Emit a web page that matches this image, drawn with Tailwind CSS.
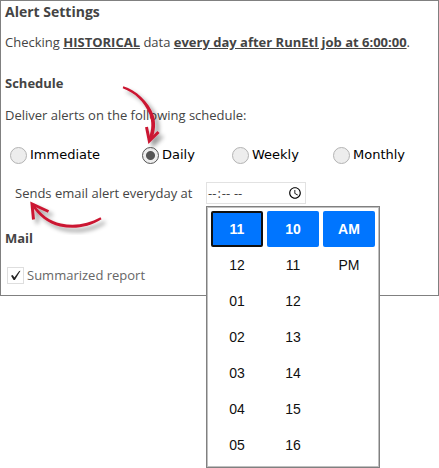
<!DOCTYPE html>
<html lang="en">
<head>
<meta charset="utf-8">
<meta name="viewport" content="width=device-width, initial-scale=1">
<title>Alert Settings</title>
<script src="https://cdn.jsdelivr.net/npm/@tailwindcss/browser@4"></script>
</head>
<body class="min-h-screen bg-white font-['Open_Sans',sans-serif] text-[13px] leading-5 text-[#444]">
<main class="relative border border-[#808080] px-1 pb-[10px]">
  <h1 class="pt-px text-sm font-bold leading-5">Alert Settings</h1>
  <p class="mt-2.5">Checking <b class="underline">HISTORICAL</b> data <b class="underline">every day after RunEtl job at 6:00:00</b>.</p>

  <h2 class="mt-[21px] font-bold">Schedule</h2>
  <p class="mt-3">Deliver alerts on the following schedule:</p>

  <div role="radiogroup" aria-label="Schedule" class="mt-5 grid grid-cols-[132fr_90fr_101fr_101fr] pl-[5px] font-['DejaVu_Sans',sans-serif] text-[13px] text-black">
    <label class="flex items-center gap-[3px]"><input type="radio" name="schedule" class="m-0 size-[17px] shrink-0 appearance-none rounded-full border border-[#b3b3b3] bg-[#ededed] checked:border-[#555] checked:bg-[radial-gradient(circle,#555_4px,#ededed_5px)]">Immediate</label>
    <label class="flex items-center gap-[3px]"><input type="radio" name="schedule" checked class="m-0 size-[17px] shrink-0 appearance-none rounded-full border border-[#b3b3b3] bg-[#ededed] checked:border-[#555] checked:bg-[radial-gradient(circle,#555_4px,#ededed_5px)]">Daily</label>
    <label class="flex items-center gap-[3px]"><input type="radio" name="schedule" class="m-0 size-[17px] shrink-0 appearance-none rounded-full border border-[#b3b3b3] bg-[#ededed] checked:border-[#555] checked:bg-[radial-gradient(circle,#555_4px,#ededed_5px)]">Weekly</label>
    <label class="flex items-center gap-[3px]"><input type="radio" name="schedule" class="m-0 size-[17px] shrink-0 appearance-none rounded-full border border-[#b3b3b3] bg-[#ededed] checked:border-[#555] checked:bg-[radial-gradient(circle,#555_4px,#ededed_5px)]">Monthly</label>
  </div>

  <div class="mt-[17px] flex items-center pl-[10px]">
    <label for="at" class="w-[191px]">Sends email alert everyday at</label>
    <div class="relative">
      <input id="at" type="time" class="block h-[22px] w-[100px] border border-[#e2e2e2] bg-white font-['Open_Sans',sans-serif] text-[13px] text-[#444]">
      <div class="absolute left-0 top-6 z-10 grid w-[174px] grid-cols-3 gap-1 border border-[#808080] bg-white p-1 font-['Liberation_Sans',sans-serif] text-sm text-[#101010] shadow-[inset_0_0_0_1px_#c0c0c0]">
        <div role="listbox" aria-label="Hours" class="flex flex-col">
          <button type="button" role="option" aria-selected="true" class="h-9 rounded-xs border-2 border-[#101010] bg-[#0075ff] font-bold text-white">11</button>
          <button type="button" role="option" class="h-9">12</button>
          <button type="button" role="option" class="h-9">01</button>
          <button type="button" role="option" class="h-9">02</button>
          <button type="button" role="option" class="h-9">03</button>
          <button type="button" role="option" class="h-9">04</button>
          <button type="button" role="option" class="h-9">05</button>
        </div>
        <div role="listbox" aria-label="Minutes" class="flex flex-col">
          <button type="button" role="option" aria-selected="true" class="h-9 rounded-xs bg-[#0075ff] font-bold text-white">10</button>
          <button type="button" role="option" class="h-9">11</button>
          <button type="button" role="option" class="h-9">12</button>
          <button type="button" role="option" class="h-9">13</button>
          <button type="button" role="option" class="h-9">14</button>
          <button type="button" role="option" class="h-9">15</button>
          <button type="button" role="option" class="h-9">16</button>
        </div>
        <div role="listbox" aria-label="AM or PM" class="flex flex-col">
          <button type="button" role="option" aria-selected="true" class="h-9 rounded-xs bg-[#0075ff] font-bold text-white">AM</button>
          <button type="button" role="option" class="h-9">PM</button>
        </div>
      </div>
    </div>
  </div>

  <h2 class="mt-6 font-bold">Mail</h2>
  <label class="mt-[17px] flex items-center gap-[3px] pl-0.5 text-[#666]">
    <span class="relative size-[17px]">
      <input type="checkbox" checked class="peer block size-[17px] appearance-none border border-[#dedede] bg-white">
      <svg class="pointer-events-none absolute inset-0 hidden peer-checked:block" width="17" height="17" viewBox="0 0 17 17" aria-hidden="true"><path d="M4 8.8 5.7 8l1.7 2.5L12.2 4l1.3-.3-5.6 9.4H6.600Z" fill="#222"/></svg>
    </span>
    Summarized report
  </label>

  <svg class="pointer-events-none absolute left-0 top-0" width="200" height="240" viewBox="1 1 200 240" aria-hidden="true">
    <defs>
      <filter id="soft" x="-30%" y="-30%" width="160%" height="160%"><feDropShadow dx="4" dy="4" stdDeviation="2" flood-color="#000" flood-opacity=".4"/></filter>
    </defs>
    <g fill="#cb1832" filter="url(#soft)">
      <path d="M123.300 86.200C136 90 149 102 153.500 115c2.500 7.500 2 16-1.500 24.500l-3-2.500C152 130 152 121 149.500 114.500 144 101 135 93 122.700 88.200Z"/>
      <path d="M146.500 127 149.300 141 158.500 132" fill="none" stroke="#cb1832" stroke-width="3"/>
    </g>
    <g fill="#cb1832" filter="url(#soft)">
      <path d="M101.500 219.300C89 227.500 74 229.500 60 226.500 48 223.500 38 216 31.500 205l2.500-1C41 215 50 221 61 223.500c14 2.800 27 .5 39.500-6.200Z"/>
      <path d="M33.500 219.500 32 204 48.500 211.500" fill="none" stroke="#cb1832" stroke-width="3"/>
    </g>
  </svg>
</main>
</body>
</html>
